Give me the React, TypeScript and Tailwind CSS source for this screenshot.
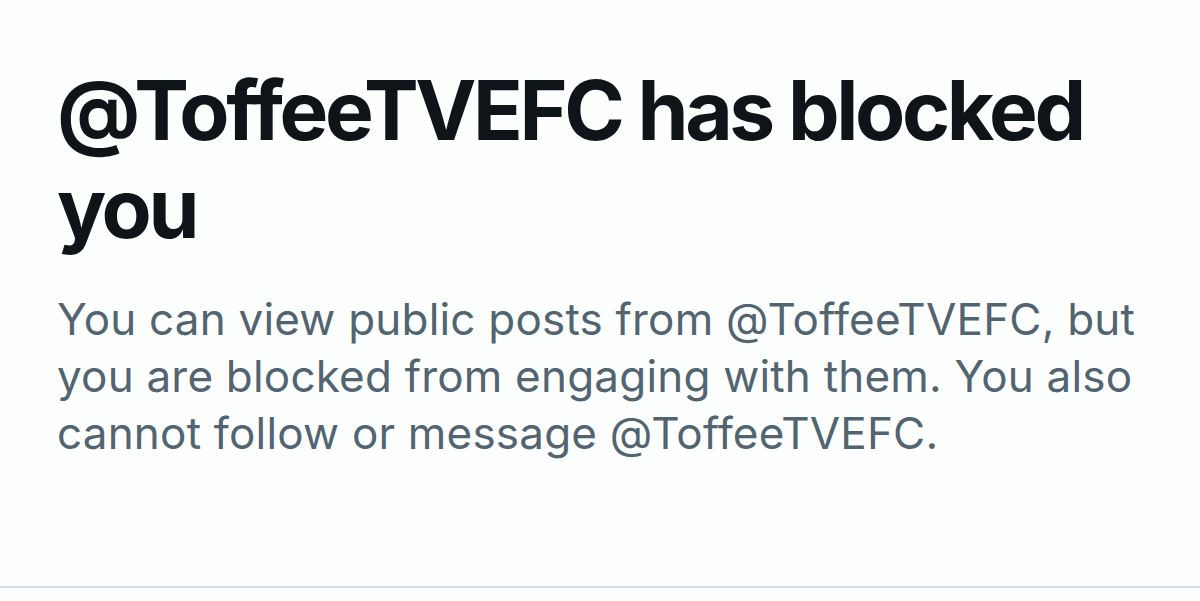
import React from 'react';

export default function App() {
  return (
    <div className="w-[1200px] h-[601px] bg-[#fdfefe] flex flex-col" style={{ fontFamily: 'Inter, "Noto Sans", sans-serif' }}>
      <div className="flex-1 px-[57px] pt-[62px]">
        <h1 className="text-[82px] leading-[98px] font-bold text-[#0f1419] tracking-[-3.4px]">
          @ToffeeTVEFC has blocked you
        </h1>
        <p className="mt-[33px] text-[44px] leading-[57px] text-[#536471] tracking-[0.2px]">
          You can view public posts from @ToffeeTVEFC, but you are blocked from engaging with them. You also cannot follow or message @ToffeeTVEFC.
        </p>
      </div>
      <div className="h-[15px] border-t-2 border-[#d6dbdd]" />
    </div>
  );
}
